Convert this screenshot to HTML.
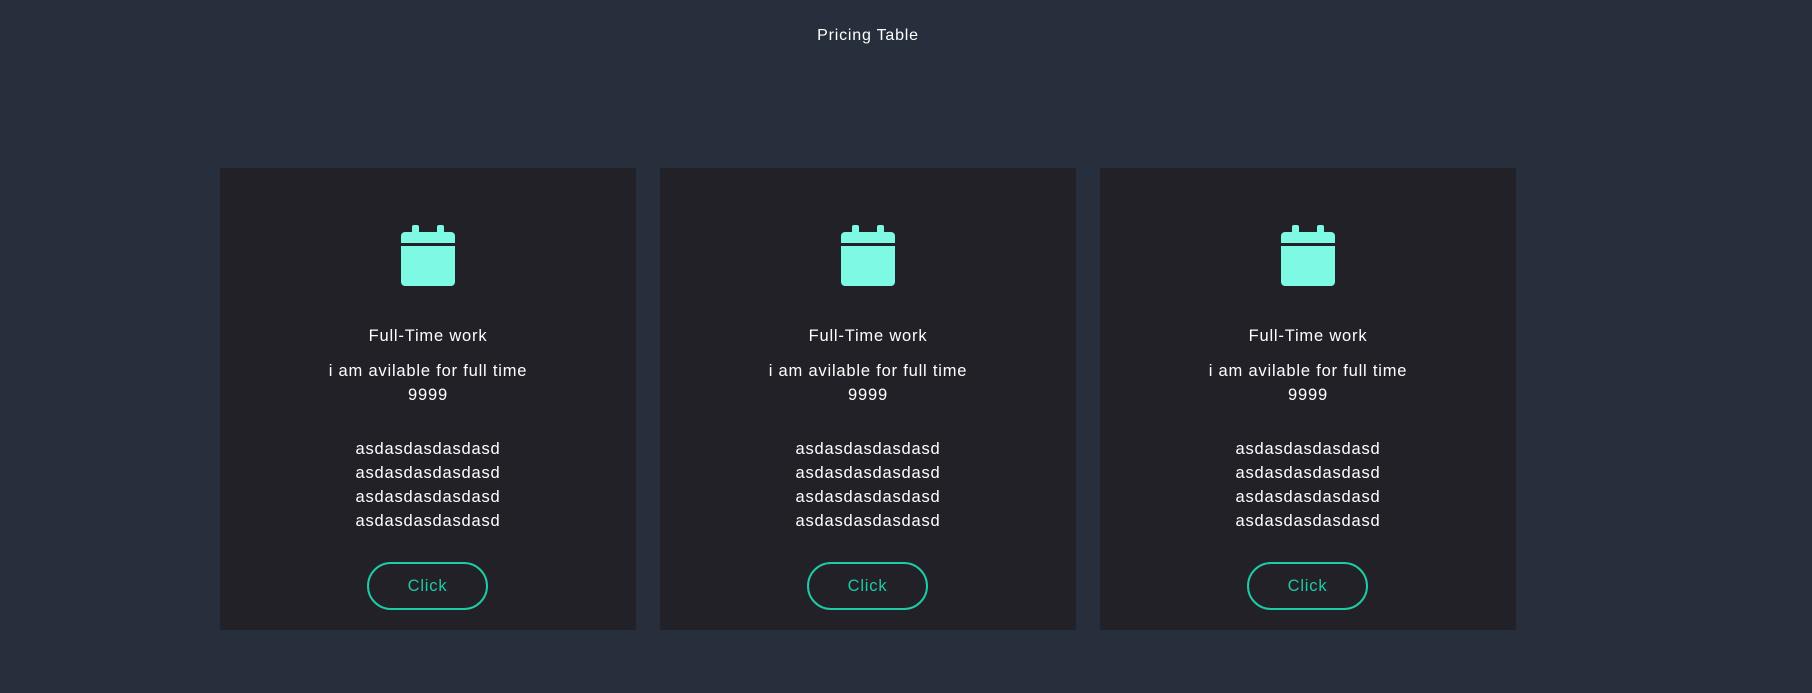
<!DOCTYPE html>
<html><head><style>
body{margin:0;width:1812px;height:693px;background:#262f3b;font-family:"Liberation Sans",sans-serif;color:#fff;position:relative;overflow:hidden;letter-spacing:0.8px}
h1{position:absolute;top:27px;left:0;width:1736px;text-align:center;font-size:16px;font-weight:normal;margin:0}
.card{position:absolute;top:168px;width:416px;height:462px;background:#222127;text-align:center;font-size:16.5px}
.ic{position:absolute;left:181px;top:57px}
.t{position:absolute;top:159px;width:100%}
.d{position:absolute;top:191px;width:100%;line-height:24px}
.l{position:absolute;top:269px;width:100%;line-height:24px}
.b{position:absolute;left:147px;top:394px;width:117px;height:44px;border:2px solid #1fcaa6;border-radius:24px;color:#1fcaa6;line-height:44px;font-size:16.5px}
</style></head><body>
<h1>Pricing Table</h1>
<div class="card" style="left:220px">
<svg class="ic" width="54" height="61" viewBox="0 0 54 61"><rect x="11" y="0" width="7" height="11" rx="2" fill="#7ef9e3"/><rect x="36" y="0" width="7" height="11" rx="2" fill="#7ef9e3"/><path d="M0 11a4 4 0 0 1 4-4h46a4 4 0 0 1 4 4v7H0z" fill="#7ef9e3"/><path d="M0 21h54v36a4 4 0 0 1-4 4H4a4 4 0 0 1-4-4z" fill="#7ef9e3"/></svg>
<div class="t">Full-Time work</div><div class="d">i am avilable for full time<br>9999</div>
<div class="l">asdasdasdasdasd<br>asdasdasdasdasd<br>asdasdasdasdasd<br>asdasdasdasdasd</div><div class="b">Click</div></div>
<div class="card" style="left:660px">
<svg class="ic" width="54" height="61" viewBox="0 0 54 61"><rect x="11" y="0" width="7" height="11" rx="2" fill="#7ef9e3"/><rect x="36" y="0" width="7" height="11" rx="2" fill="#7ef9e3"/><path d="M0 11a4 4 0 0 1 4-4h46a4 4 0 0 1 4 4v7H0z" fill="#7ef9e3"/><path d="M0 21h54v36a4 4 0 0 1-4 4H4a4 4 0 0 1-4-4z" fill="#7ef9e3"/></svg>
<div class="t">Full-Time work</div><div class="d">i am avilable for full time<br>9999</div>
<div class="l">asdasdasdasdasd<br>asdasdasdasdasd<br>asdasdasdasdasd<br>asdasdasdasdasd</div><div class="b">Click</div></div>
<div class="card" style="left:1100px">
<svg class="ic" width="54" height="61" viewBox="0 0 54 61"><rect x="11" y="0" width="7" height="11" rx="2" fill="#7ef9e3"/><rect x="36" y="0" width="7" height="11" rx="2" fill="#7ef9e3"/><path d="M0 11a4 4 0 0 1 4-4h46a4 4 0 0 1 4 4v7H0z" fill="#7ef9e3"/><path d="M0 21h54v36a4 4 0 0 1-4 4H4a4 4 0 0 1-4-4z" fill="#7ef9e3"/></svg>
<div class="t">Full-Time work</div><div class="d">i am avilable for full time<br>9999</div>
<div class="l">asdasdasdasdasd<br>asdasdasdasdasd<br>asdasdasdasdasd<br>asdasdasdasdasd</div><div class="b">Click</div></div>
</body></html>
